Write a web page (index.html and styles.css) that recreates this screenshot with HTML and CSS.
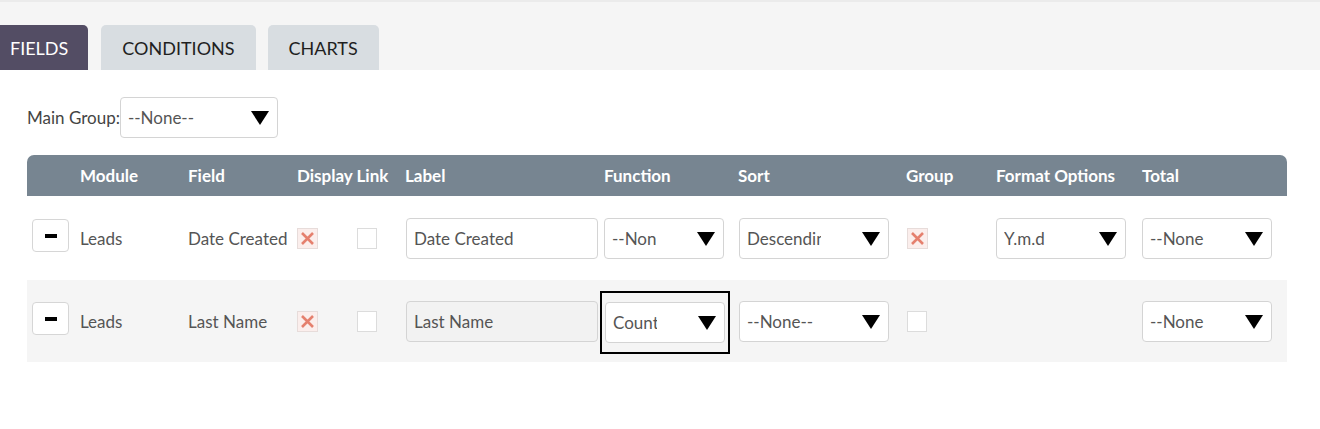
FILE: index.html
```html
<!DOCTYPE html>
<html>
<head>
<meta charset="utf-8">
<link rel="stylesheet" href="styles.css">
</head>
<body>
<div class="topbar">
  <div class="tab active">FIELDS</div>
  <div class="tab">CONDITIONS</div>
  <div class="tab">CHARTS</div>
</div>
<div class="content">
  <div class="maingroup">
    <span class="mg-label">Main Group:</span>
    <div class="select w157"><span class="sel-text">--None--</span><span class="arrow"></span></div>
  </div>
  <div class="table">
    <div class="row head">
      <div></div>
      <div>Module</div>
      <div>Field</div>
      <div>Display Link</div>
      <div>Label</div>
      <div>Function</div>
      <div>Sort</div>
      <div>Group</div>
      <div>Format Options</div>
      <div>Total</div>
    </div>
    <div class="row body r1">
      <div class="c-btn"><button class="minus"><span></span></button></div>
      <div>Leads</div>
      <div>Date Created</div>
      <div class="c-checks">
        <span class="chk x"><svg viewBox="0 0 21 21" width="21" height="21"><path d="M5 5 L16 16 M16 5 L5 16" stroke="#e5806e" stroke-width="2.6"/></svg></span>
        <span class="chk empty"></span>
      </div>
      <div class="c-label"><div class="input">Date Created</div></div>
      <div><div class="select w120"><span class="sel-text">--None--</span><span class="arrow"></span></div></div>
      <div class="off1"><div class="select w150"><span class="sel-text">Descending</span><span class="arrow"></span></div></div>
      <div class="off1"><span class="chk x"><svg viewBox="0 0 21 21" width="21" height="21"><path d="M5 5 L16 16 M16 5 L5 16" stroke="#e5806e" stroke-width="2.6"/></svg></span></div>
      <div><div class="select w130"><span class="sel-text">Y.m.d</span><span class="arrow"></span></div></div>
      <div><div class="select w130"><span class="sel-text">--None--</span><span class="arrow"></span></div></div>
    </div>
    <div class="row body r2">
      <div class="c-btn"><button class="minus"><span></span></button></div>
      <div>Leads</div>
      <div>Last Name</div>
      <div class="c-checks">
        <span class="chk x"><svg viewBox="0 0 21 21" width="21" height="21"><path d="M5 5 L16 16 M16 5 L5 16" stroke="#e5806e" stroke-width="2.6"/></svg></span>
        <span class="chk empty"></span>
      </div>
      <div class="c-label"><div class="input grey">Last Name</div></div>
      <div><div class="highlight"><div class="select w120"><span class="sel-text">Count</span><span class="arrow"></span></div></div></div>
      <div class="off1"><div class="select w150"><span class="sel-text">--None--</span><span class="arrow"></span></div></div>
      <div class="off1"><span class="chk empty"></span></div>
      <div></div>
      <div><div class="select w130"><span class="sel-text">--None--</span><span class="arrow"></span></div></div>
    </div>
  </div>
</div>
</body>
</html>
```

FILE: styles.css
```css
* { box-sizing: border-box; }
body {
  margin: 0;
  font-family: Lato, "Open Sans", Arial, sans-serif;
  background: #fff;
  color: #555;
}
.topbar {
  height: 70px;
  background: #f5f5f5;
  border-top: 2px solid #ebebeb;
  display: flex;
  align-items: flex-end;
  gap: 12px;
}
.tab {
  height: 45px;
  display: flex;
  align-items: center;
  padding: 1px 21px 0;
  background: #d8dde1;
  color: #1f1f1f;
  font-size: 18px;
  border-radius: 5px 5px 0 0;
}
.tab.active {
  background: #534d64;
  color: #fff;
  padding: 1px 20px 0 10px;
  border-radius: 0 5px 0 0;
  margin-right: 1px;
}
.content {
  padding: 27px 0 0 27px;
}
.maingroup {
  display: flex;
  align-items: center;
  height: 41px;
}
.mg-label {
  font-size: 17px;
  color: #444;
}
.select {
  height: 41px;
  background: #fff;
  border: 1px solid #d4d4d4;
  border-radius: 4px;
  display: flex;
  align-items: center;
  padding-left: 7px;
  position: relative;
  font-size: 17px;
  color: #555;
}
.sel-text {
  white-space: nowrap;
  overflow: hidden;
  flex: 1;
  margin-right: 67px;
}
.arrow {
  position: absolute;
  right: 8px;
  top: 13px;
  width: 0;
  height: 0;
  border-left: 9px solid transparent;
  border-right: 9px solid transparent;
  border-top: 14px solid #000;
}
.w157 { width: 158px; }
.w120 { width: 120px; }
.w150 { width: 150px; }
.w130 { width: 130px; }
.table {
  margin-top: 17px;
  width: 1260px;
}
.row {
  display: grid;
  grid-template-columns: 53px 108px 109px 108px 199px 134px 168px 90px 146px 145px;
  align-items: center;
}
.head {
  height: 41px;
  background: #778591;
  border-radius: 7px 7px 0 0;
  color: #fff;
  font-weight: bold;
  font-size: 17px;
}
.body {
  font-size: 17px;
  color: #555;
}
.r1 { height: 84px; background: #fff; }
.r2 { height: 82px; background: #f5f5f5; }
.c-btn { padding-left: 5px; }
.minus {
  width: 37px;
  height: 33px;
  background: #fff;
  border: 1px solid #d6d6d6;
  border-radius: 4px;
  display: flex;
  align-items: center;
  justify-content: center;
  padding: 0;
  margin-top: -5px;
}
.minus span {
  display: block;
  width: 12px;
  height: 4px;
  background: #000;
}
.c-checks {
  display: flex;
  align-items: center;
  gap: 39px;
}
.chk {
  display: block;
  width: 21px;
  height: 21px;
  border: 1px solid #dcdcdc;
  background: #fff;
}
.chk.x {
  background: #fbeeec;
  border-color: #e7dcda;
  position: relative;
}
.chk.x svg { position: absolute; left: -1px; top: -1px; }
.chk.empty { width: 20px; height: 21px; }
.c-label { padding-left: 1px; }
.input {
  width: 192px;
  height: 41px;
  border: 1px solid #d4d4d4;
  border-radius: 4px;
  background: #fff;
  display: flex;
  align-items: center;
  padding-left: 7px;
  font-size: 17px;
  color: #555;
}
.input.grey { background: #f2f2f2; }
.off1 { padding-left: 1px; }
.highlight {
  display: inline-block;
  margin-left: -4px;
  border: 2px solid #000;
  padding: 9px 3px;
  margin-top: 2px;
}
.highlight .select { background: #fff; }
```
